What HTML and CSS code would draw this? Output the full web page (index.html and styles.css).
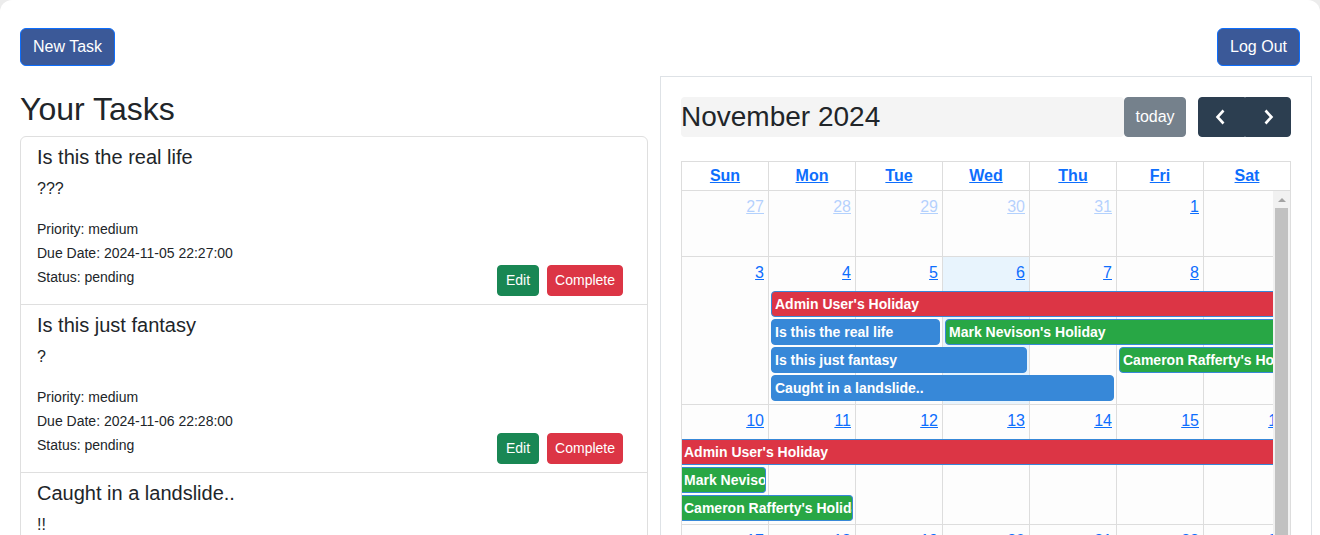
FILE: index.html
```html
<!DOCTYPE html>
<html lang="en">
<head>
<meta charset="utf-8">
<title>Tasks</title>
<link rel="stylesheet" href="styles.css">
</head>
<body>
<div class="app">
  <header class="topbar">
    <button class="btn btn-primary">New Task</button>
    <button class="btn btn-primary">Log Out</button>
  </header>

  <main class="main">
    <section class="tasks">
      <h2 class="tasks-title">Your Tasks</h2>
      <ul class="task-list">
        <li class="task">
          <div class="task-body">
            <h5 class="task-name">Is this the real life</h5>
            <p class="task-desc">???</p>
            <div class="task-meta">
              <p>Priority: medium</p>
              <p>Due Date: 2024-11-05 22:27:00</p>
              <p>Status: pending</p>
            </div>
          </div>
          <div class="task-actions">
            <button class="btn-sm btn-edit">Edit</button>
            <button class="btn-sm btn-complete">Complete</button>
          </div>
        </li>
        <li class="task">
          <div class="task-body">
            <h5 class="task-name">Is this just fantasy</h5>
            <p class="task-desc">?</p>
            <div class="task-meta">
              <p>Priority: medium</p>
              <p>Due Date: 2024-11-06 22:28:00</p>
              <p>Status: pending</p>
            </div>
          </div>
          <div class="task-actions">
            <button class="btn-sm btn-edit">Edit</button>
            <button class="btn-sm btn-complete">Complete</button>
          </div>
        </li>
        <li class="task">
          <div class="task-body">
            <h5 class="task-name">Caught in a landslide..</h5>
            <p class="task-desc">!!</p>
            <div class="task-meta">
              <p>Priority: medium</p>
              <p>Due Date: 2024-11-07 22:29:00</p>
              <p>Status: pending</p>
            </div>
          </div>
          <div class="task-actions">
            <button class="btn-sm btn-edit">Edit</button>
            <button class="btn-sm btn-complete">Complete</button>
          </div>
        </li>
      </ul>
    </section>

    <section class="calendar">
      <div class="cal-toolbar">
        <h2 class="cal-title">November 2024</h2>
        <button class="fc-btn fc-today" disabled>today</button>
        <div class="fc-group">
          <button class="fc-btn fc-nav" aria-label="prev">
            <svg viewBox="0 0 24 24" width="24" height="24"><polyline points="14.5,5.5 8.5,12 14.5,18.5" fill="none" stroke="#fff" stroke-width="2.6"/></svg>
          </button>
          <button class="fc-btn fc-nav" aria-label="next">
            <svg viewBox="0 0 24 24" width="24" height="24"><polyline points="9.5,5.5 15.5,12 9.5,18.5" fill="none" stroke="#fff" stroke-width="2.6"/></svg>
          </button>
        </div>
      </div>

      <div class="cal-table">
        <div class="cal-head">
          <div class="head-cell"><a href="#">Sun</a></div>
          <div class="head-cell"><a href="#">Mon</a></div>
          <div class="head-cell"><a href="#">Tue</a></div>
          <div class="head-cell"><a href="#">Wed</a></div>
          <div class="head-cell"><a href="#">Thu</a></div>
          <div class="head-cell"><a href="#">Fri</a></div>
          <div class="head-cell"><a href="#">Sat</a></div>
        </div>
        <div class="cal-body">
          <div class="cal-clip">
            <div class="weeks">
              <div class="week">
                <div class="days">
                  <div class="day other"><a href="#">27</a></div>
                  <div class="day other"><a href="#">28</a></div>
                  <div class="day other"><a href="#">29</a></div>
                  <div class="day other"><a href="#">30</a></div>
                  <div class="day other"><a href="#">31</a></div>
                  <div class="day"><a href="#">1</a></div>
                  <div class="day"><a href="#">2</a></div>
                </div>
                <div class="events"></div>
              </div>

              <div class="week">
                <div class="days">
                  <div class="day"><a href="#">3</a></div>
                  <div class="day"><a href="#">4</a></div>
                  <div class="day"><a href="#">5</a></div>
                  <div class="day today"><a href="#">6</a></div>
                  <div class="day"><a href="#">7</a></div>
                  <div class="day"><a href="#">8</a></div>
                  <div class="day"><a href="#">9</a></div>
                </div>
                <div class="events">
                  <div class="ev ev-red cont-end" style="grid-column: 2 / 8; grid-row: 1;">Admin User's Holiday</div>
                  <div class="ev ev-blue" style="grid-column: 2 / 4; grid-row: 2;">Is this the real life</div>
                  <div class="ev ev-green cont-end" style="grid-column: 4 / 8; grid-row: 2;">Mark Nevison's Holiday</div>
                  <div class="ev ev-blue" style="grid-column: 2 / 5; grid-row: 3;">Is this just fantasy</div>
                  <div class="ev ev-green cont-end" style="grid-column: 6 / 8; grid-row: 3;">Cameron Rafferty's Holiday</div>
                  <div class="ev ev-blue" style="grid-column: 2 / 6; grid-row: 4;">Caught in a landslide..</div>
                </div>
              </div>

              <div class="week">
                <div class="days">
                  <div class="day"><a href="#">10</a></div>
                  <div class="day"><a href="#">11</a></div>
                  <div class="day"><a href="#">12</a></div>
                  <div class="day"><a href="#">13</a></div>
                  <div class="day"><a href="#">14</a></div>
                  <div class="day"><a href="#">15</a></div>
                  <div class="day"><a href="#">16</a></div>
                </div>
                <div class="events">
                  <div class="ev ev-red cont-start cont-end" style="grid-column: 1 / 8; grid-row: 1;">Admin User's Holiday</div>
                  <div class="ev ev-green cont-start" style="grid-column: 1 / 2; grid-row: 2;">Mark Nevison's Holiday</div>
                  <div class="ev ev-green cont-start" style="grid-column: 1 / 3; grid-row: 3;">Cameron Rafferty's Holiday</div>
                </div>
              </div>

              <div class="week">
                <div class="days">
                  <div class="day"><a href="#">17</a></div>
                  <div class="day"><a href="#">18</a></div>
                  <div class="day"><a href="#">19</a></div>
                  <div class="day"><a href="#">20</a></div>
                  <div class="day"><a href="#">21</a></div>
                  <div class="day"><a href="#">22</a></div>
                  <div class="day"><a href="#">23</a></div>
                </div>
                <div class="events"></div>
              </div>
            </div>
          </div>
          <div class="vscroll">
            <div class="vscroll-btn"></div>
            <div class="vscroll-thumb"></div>
          </div>
        </div>
      </div>
    </section>
  </main>
</div>
</body>
</html>
```

FILE: styles.css
```css
* { box-sizing: border-box; }

html, body {
  margin: 0;
  height: 100%;
  overflow: hidden;
}

body {
  background: #ececec;
  font-family: "Liberation Sans", Arial, sans-serif;
  color: #212529;
  font-size: 16px;
}

.app {
  background: #fff;
  min-height: 100vh;
  border-radius: 12px 12px 0 0;
}

button { font-family: inherit; cursor: pointer; }

/* top bar */
.topbar {
  display: flex;
  justify-content: space-between;
  padding: 28px 20px 0;
}

.btn {
  font-size: 16px;
  line-height: 24px;
  padding: 6px 12px;
  border-radius: 6px;
}

.btn-primary {
  background: #3b5998;
  border: 1px solid #0d6efd;
  color: #fff;
}

/* main layout */
.main {
  display: grid;
  grid-template-columns: 628px 652px;
  column-gap: 12px;
  padding: 0 8px 0 20px;
  margin-top: 10px;
}

/* tasks */
.tasks-title {
  font-size: 32px;
  font-weight: 400;
  line-height: 38px;
  margin: 14px 0 8px;
}

.task-list {
  list-style: none;
  margin: 0;
  padding: 0;
  border: 1px solid #dfdfdf;
  border-radius: 6px 6px 0 0;
}

.task {
  display: flex;
  align-items: flex-end;
  padding: 8px 16px 7px;
  border-bottom: 1px solid #dfdfdf;
}

.task-body { flex: 1; }

.task-name {
  font-size: 20px;
  font-weight: 400;
  line-height: 24px;
  margin: 0 0 8px;
}

.task-desc {
  font-size: 16px;
  line-height: 24px;
  margin: 0 0 16px;
}

.task-meta {
  margin-bottom: 8px;
}

.task-meta p {
  margin: 0;
  font-size: 14px;
  line-height: 24px;
}

.task-actions {
  display: flex;
  margin-bottom: 1px;
}

.btn-sm {
  font-size: 14px;
  line-height: 21px;
  padding: 4px 8px;
  border-radius: 4px;
  color: #fff;
  margin-right: 8px;
}

.btn-edit {
  background: #198754;
  border: 1px solid #198754;
}

.btn-complete {
  background: #dc3545;
  border: 1px solid #dc3545;
  padding: 4px 7px;
}

/* calendar */
.calendar {
  border: 1px solid #dee2e6;
  padding: 20px;
  background: #fff;
}

.cal-toolbar {
  display: flex;
  align-items: center;
  height: 40px;
  margin-bottom: 24px;
}

.cal-title {
  flex: 1;
  margin: 0;
  font-size: 28px;
  font-weight: 400;
  line-height: 40px;
  background: #f4f4f4;
  border-radius: 4px;
  color: #212529;
}

.fc-btn {
  height: 40px;
  background: #2c3e50;
  border: 1px solid #2c3e50;
  color: #fff;
  font-size: 16px;
  line-height: 24px;
  padding: 0 10.4px;
  border-radius: 4px;
}

.fc-today {
  opacity: 0.65;
  cursor: default;
}

.fc-group {
  display: flex;
  margin-left: 12px;
}

.fc-nav {
  width: 46.5px;
  padding: 0;
  display: flex;
  align-items: center;
  justify-content: center;
}

.fc-nav:first-child { border-radius: 4px 0 0 4px; }
.fc-nav:last-child { border-radius: 0 4px 4px 0; }

.cal-table {
  border: 1px solid #ddd;
  border-bottom: 0;
}

.cal-head {
  display: grid;
  grid-template-columns: repeat(7, 86px);
  column-gap: 1px;
  background: #ddd;
  border-bottom: 1px solid #ddd;
}

.head-cell {
  background: #fff;
  padding: 2px;
  text-align: center;
  font-weight: 700;
  line-height: 24px;
}

.head-cell a,
.day a {
  color: #0d6efd;
  text-decoration: underline;
}

.cal-body {
  display: flex;
  height: 380px;
}

.cal-clip {
  flex: 1;
  overflow: hidden;
}

.weeks {
  width: 608px;
}

.week {
  display: grid;
  min-height: 66px;
  border-bottom: 1px solid #ddd;
}

.days,
.events {
  grid-area: 1 / 1;
  display: grid;
  grid-template-columns: repeat(7, 86px);
  column-gap: 1px;
}

.days {
  background: #ddd;
}

.day {
  background: #fdfdfd;
  text-align: right;
  padding: 4px;
  line-height: 24px;
}

.day.today {
  background: #e8f4fd;
}

.day.other a {
  opacity: 0.3;
}

.events {
  grid-auto-rows: 26px;
  row-gap: 2px;
  padding: 34px 0 3px;
  align-content: start;
}

.ev {
  margin: 0 2px;
  border: 1px solid #3788d8;
  border-radius: 4px;
  color: #fff;
  font-size: 14px;
  font-weight: 700;
  line-height: 24px;
  padding: 0 3px;
  white-space: nowrap;
  overflow: hidden;
}

.ev-red { background: #dc3545; }
.ev-blue { background: #3788d8; }
.ev-green { background: #28a745; }

.ev.cont-end {
  margin-right: 0;
  border-top-right-radius: 0;
  border-bottom-right-radius: 0;
}

.ev.cont-start {
  margin-left: 0;
  border-left-width: 0;
  padding-left: 2px;
  border-top-left-radius: 0;
  border-bottom-left-radius: 0;
}

/* scrollbar */
.vscroll {
  width: 17px;
  background: #f1f1f1;
  display: flex;
  flex-direction: column;
}

.vscroll-btn {
  height: 17px;
  display: flex;
  align-items: center;
  justify-content: center;
}

.vscroll-btn::before {
  content: "";
  border-left: 4px solid transparent;
  border-right: 4px solid transparent;
  border-bottom: 4px solid #a3a3a3;
}

.vscroll-thumb {
  flex: 1;
  margin: 0 2px;
  background: #c1c1c1;
}
```
